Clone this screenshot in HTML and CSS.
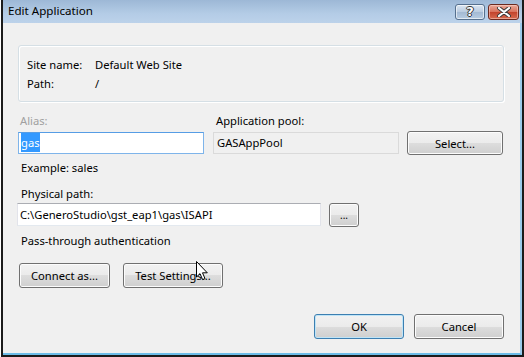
FILE: index.html
```html
<!DOCTYPE html>
<html>
<head>
  <meta charset="utf-8">
  <link rel="stylesheet" href="styles.css">
</head>
<body>
  <div class="window">
    <!-- Title bar -->
    <div class="titlebar">
      <div class="title">Edit Application</div>
      <div class="caption-btns">
        <div class="cap-btn help">?</div>
        <div class="cap-btn close">
          <svg width="16" height="10" viewBox="0 0 16 10">
            <path d="M3 1 L13 9 M13 1 L3 9" stroke="#3a3a3a" stroke-width="4" stroke-linecap="round"/>
            <path d="M3 1 L13 9 M13 1 L3 9" stroke="#fff" stroke-width="2.2" stroke-linecap="round"/>
          </svg>
        </div>
      </div>
    </div>

    <div class="client">
      <!-- Site info -->
      <div class="group">
        <div class="info-row">
          <span class="info-label">Site name:</span>
          <span class="info-value">Default Web Site</span>
        </div>
        <div class="info-row">
          <span class="info-label">Path:</span>
          <span class="info-value">/</span>
        </div>
      </div>

      <!-- Alias / pool -->
      <div class="field-row">
        <div class="alias-col">
          <div class="label disabled">Alias:</div>
          <div class="textbox focused"><span class="selected">gas</span></div>
          <div class="label hint">Example: sales</div>
        </div>
        <div class="pool-col">
          <div class="label pool-label">Application pool:</div>
          <div class="pool-row">
            <div class="textbox readonly">GASAppPool</div>
            <button class="btn select-btn">Select...</button>
          </div>
        </div>
      </div>

      <!-- Physical path -->
      <div class="label hint path-label">Physical path:</div>
      <div class="path-row">
        <div class="textbox path-box">C:\GeneroStudio\gst_eap1\gas\ISAPI</div>
        <button class="btn browse-btn">...</button>
      </div>
      <div class="label hint auth-label">Pass-through authentication</div>

      <div class="action-row">
        <button class="btn connect-btn">Connect as...</button>
        <button class="btn test-btn">Test Settings...</button>
      </div>

      <div class="dialog-btns">
        <button class="btn dlg-btn default">OK</button>
        <button class="btn dlg-btn">Cancel</button>
      </div>
    </div>
  </div>

  <!-- mouse pointer -->
  <svg class="cursor" width="13" height="20" viewBox="0 0 13 20">
    <path d="M0.5 0.5 L0.5 16 L4 12.6 L6.6 18.6 L9 17.6 L6.5 11.8 L11.3 11.8 Z" fill="#fff" stroke="#000" stroke-width="1"/>
  </svg>
</body>
</html>
```

FILE: styles.css
```css
body {
  margin: 0;
  width: 524px;
  height: 357px;
  background: #fff;
  font-family: "Noto Sans", "Open Sans", sans-serif;
  font-size: 11.2px;
  color: #000;
  position: relative;
  overflow: hidden;
}

.window {
  height: 357px;
  margin-left: 1px;
  box-sizing: border-box;
  border-left: 2px solid #1b1b1b;
  border-right: 2px solid #1b1b1b;
  border-bottom: 2px solid #1b1b1b;
  display: flex;
  flex-direction: column;
}

/* Title bar */
.titlebar {
  height: 23px;
  flex-shrink: 0;
  background: linear-gradient(#9db8d6, #b4cce6 60%, #bcd2ea);
  display: flex;
  align-items: flex-start;
  justify-content: space-between;
}

.title {
  padding-left: 5px;
  line-height: 22px;
  font-size: 11.6px;
  color: #000;
}

.caption-btns {
  display: flex;
  gap: 3px;
  margin-top: 4px;
  margin-right: 3px;
}

.cap-btn {
  width: 28px;
  height: 14px;
  border: 1px solid #56708e;
  border-radius: 3px;
  display: flex;
  align-items: center;
  justify-content: center;
}

.help {
  background: linear-gradient(#dbe6f2, #b9cbe0 50%, #a3b9d3 50%, #b7cce2);
  box-shadow: inset 0 0 0 1px rgba(255,255,255,0.6);
  color: #fff;
  font-family: "DejaVu Sans", sans-serif;
  font-size: 13px;
  font-weight: bold;
  line-height: 14px;
  text-shadow: 1px 0 0 #333, -1px 0 0 #333, 0 1px 0 #333, 0 -1px 0 #333;
}

.close {
  width: 29px;
  border-color: #6b2a20;
  background: linear-gradient(#e9a99a, #d8705a 50%, #c2422b 50%, #d76a4f);
  box-shadow: inset 0 0 0 1px rgba(255,220,210,0.5);
}

/* Client area */
.client {
  flex: 1;
  background: #f0f0f0;
  border-right: 2px solid #9ccbec;
  border-bottom: 2px solid #6cbce8;
  padding: 22px 16px 14px 15px;
  display: flex;
  flex-direction: column;
}

.group {
  height: 57px;
  box-sizing: border-box;
  border: 1px solid #d5dfe5;
  border-radius: 3px;
  padding: 9px 8px 8px 8px;
  box-shadow: inset 1px 1px 0 #fff, 1px 1px 0 #fff;
}

.info-row {
  display: flex;
  line-height: 19px;
}

.info-label {
  width: 68px;
}

.label {
  line-height: 17px;
}

.disabled {
  color: #a0a0a0;
  padding-left: 2px;
}

.hint {
  padding-left: 3px;
}

.pool-label {
  padding-left: 3px;
}

.field-row {
  display: flex;
  gap: 9px;
  margin-top: 10px;
}

.alias-col {
  width: 186px;
}

.alias-col .textbox {
  margin-top: 3px;
}

.alias-col .hint {
  margin-top: 5px;
}

.pool-col {
  flex: 1;
}

.pool-row {
  display: flex;
  align-items: center;
  gap: 8px;
  margin-top: 2px;
}

.textbox {
  height: 22px;
  box-sizing: border-box;
  background: #fff;
  border: 1px solid #e2e3ea;
  border-top-color: #abadb3;
  border-bottom-color: #e3e9ef;
  line-height: 20px;
  padding-left: 2px;
  white-space: nowrap;
}

.textbox.focused {
  border-color: #7eb4ea;
  border-top-color: #569de5;
}

.selected {
  background: #3399ff;
  color: #fff;
  padding: 2px 0;
}

.textbox.readonly {
  width: 186px;
  background: #f0f0f0;
  border-color: #dadada;
  padding-left: 3px;
}

.btn {
  font-family: "Noto Sans", "Open Sans", sans-serif;
  font-size: 11.2px;
  color: #000;
  padding: 0;
  box-sizing: border-box;
  border: 1px solid #707070;
  border-radius: 3px;
  background: linear-gradient(#f2f2f2, #ebebeb 50%, #dddddd 50%, #cfcfcf);
  box-shadow: inset 0 0 0 1px #fcfcfc;
}

.select-btn {
  width: 96px;
  height: 24px;
}

.path-label {
  margin-top: 10px;
  line-height: 16px;
}

.path-row {
  display: flex;
  align-items: center;
  gap: 8px;
}

.path-box {
  width: 304px;
  height: 23px;
  margin-left: -1px;
  line-height: 21px;
}

.browse-btn {
  width: 30px;
  height: 24px;
  font-size: 10px;
  margin-top: 1px;
}

.auth-label {
  margin-top: 6px;
  line-height: 16px;
}

.action-row {
  display: flex;
  gap: 13px;
  margin-top: 14px;
  padding-left: 1px;
}

.connect-btn {
  width: 91px;
  height: 25px;
}

.test-btn {
  width: 100px;
  height: 25px;
}

.dialog-btns {
  margin-top: auto;
  display: flex;
  justify-content: flex-end;
  gap: 10px;
}

.dlg-btn {
  width: 90px;
  height: 25px;
}

.dlg-btn.default {
  border-color: #3c7fb1;
  box-shadow: inset 0 0 0 1px #bfe4f7;
}

.cursor {
  position: absolute;
  left: 196px;
  top: 261px;
}
```
